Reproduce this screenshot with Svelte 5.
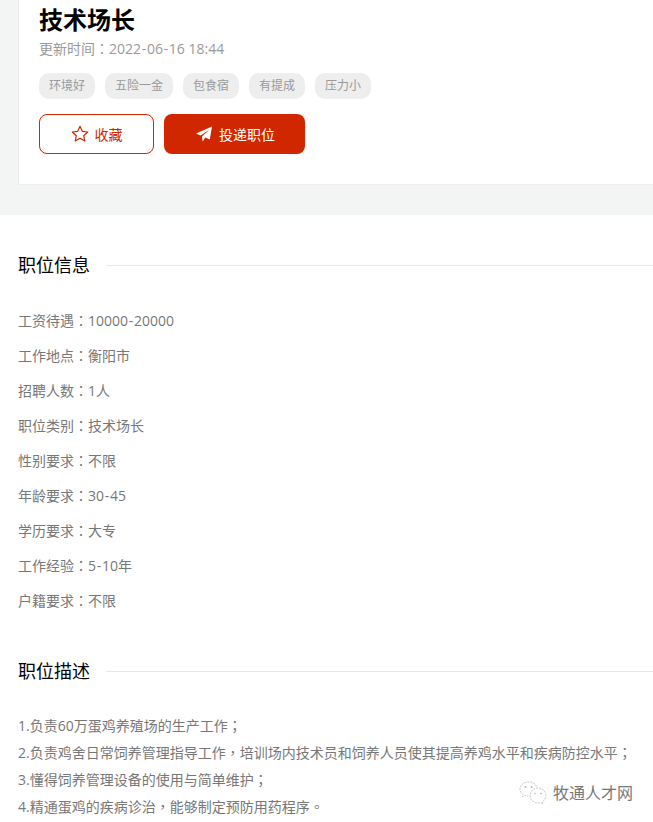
<script>
  const tags = ['环境好', '五险一金', '包食宿', '有提成', '压力小'];
  const info = [
    ['工资待遇', '10000-20000'],
    ['工作地点', '衡阳市'],
    ['招聘人数', '1人'],
    ['职位类别', '技术场长'],
    ['性别要求', '不限'],
    ['年龄要求', '30-45'],
    ['学历要求', '大专'],
    ['工作经验', '5-10年'],
    ['户籍要求', '不限']
  ];
  const desc = [
    ['1.负责60万蛋鸡养殖场的生产工作', '；'],
    ['2.负责鸡舍日常饲养管理指导工作', '，', '培训场内技术员和饲养人员使其提高养鸡水平和疾病防控水平', '；'],
    ['3.懂得饲养管理设备的使用与简单维护', '；'],
    ['4.精通蛋鸡的疾病诊治', '，', '能够制定预防用药程序', '。']
  ];
  const marks = '：；，。';
  const split = (s) => s.split(/(-)/);
</script>

{#snippet dashed(text)}{#each split(text) as part}{#if part === '-'}<span class="dash">-</span>{:else}{part}{/if}{/each}{/snippet}

<div class="page">
  <section class="top">
    <div class="card">
      <h1>技术场长</h1>
      <p class="updated"><span>更新时间</span><span class="mark">：</span>{@render dashed('2022-06-16')} 18:44</p>
      <ul class="tags">
        {#each tags as tag}
          <li>{tag}</li>
        {/each}
      </ul>
      <div class="actions">
        <button class="fav">
          <svg viewBox="0 0 18 18" width="18" height="18" aria-hidden="true">
            <path d="M9 1.300l2.300 5 5.400.700-4 3.700 1.100 5.300L9 13.300l-4.800 2.700 1.100-5.300-4-3.700 5.400-.700z" fill="none" stroke="currentColor" stroke-width="1.200" stroke-linejoin="round" />
          </svg>
          收藏
        </button>
        <button class="apply">
          <svg viewBox="0 0 16 16" width="16" height="16" aria-hidden="true">
            <path d="M16 .5L13.800 13.600 9.300 11.600 6.600 15.500 6 10.400 13.400 3.700 4.600 9.600 0 7.600z" fill="currentColor" />
          </svg>
          投递职位
        </button>
      </div>
    </div>
  </section>

  <section class="info">
    <h2><span>职位信息</span></h2>
    <ul class="rows">
      {#each info as row}
        <li>{row[0]}<span class="mark">：</span>{@render dashed(row[1])}</li>
      {/each}
    </ul>
  </section>

  <section class="desc">
    <h2><span>职位描述</span></h2>
    <div class="lines">
      {#each desc as line}
        <p>{#each line as part}{#if marks.includes(part)}<span class="mark">{part}</span>{:else}{part}{/if}{/each}</p>
      {/each}
    </div>
  </section>

  <div class="watermark">
    <svg viewBox="0 0 28 24" width="28" height="24" aria-hidden="true">
      <g fill="none" stroke="#c4c4c4" stroke-width=".9" stroke-dasharray="2 1">
        <path d="M17.500 5.500C16.500 2.800 13.500 1 9.700 1 4.800 1 1 4 1 8c0 2.300 1.200 4.200 3.200 5.600l-.8 2.400 2.900-1.500c1 .3 2 .5 3.200.5" />
        <path d="M27 14.500c0-4-3.800-7.500-8-7.500s-8 3.500-8 7.500 3.800 7.500 8 7.500c1 0 1.800-.1 2.600-.4l2.500 1.400-.7-2.300c2-1.300 3.600-3.600 3.600-6.200z" />
      </g>
      <circle cx="6.500" cy="6" r="1" fill="#b5b5b5" />
      <circle cx="12.500" cy="6" r="1" fill="#b5b5b5" />
      <circle cx="16" cy="12.500" r=".8" fill="#b5b5b5" />
      <circle cx="22" cy="12.500" r=".8" fill="#b5b5b5" />
    </svg>
    <span>牧通人才网</span>
  </div>
</div>

<style>
  :global(body) {
    margin: 0;
    background: #fff;
  }
  .page {
    position: relative;
    width: 653px;
    height: 822px;
    overflow: hidden;
    font-family: "Open Sans", "Noto Sans CJK SC", sans-serif;
    color: #777;
  }
  .mark {
    font-family: "Noto Sans CJK TC", sans-serif;
  }
  .dash {
    padding: 0 .7px;
  }
  .top {
    height: 215px;
    background: #f3f4f4;
    padding-left: 18px;
    box-sizing: border-box;
  }
  .card {
    height: 185px;
    box-sizing: border-box;
    background: #fff;
    border-left: 1px solid #eee;
    border-bottom: 1px solid #eee;
    padding: 0 0 0 20px;
  }
  h1 {
    margin: 0;
    height: 38px;
    line-height: 39px;
    font-size: 24px;
    font-weight: 700;
    color: #000;
  }
  .updated {
    margin: 0;
    height: 20px;
    line-height: 20px;
    font-size: 14px;
    color: #999;
  }
  .tags {
    display: flex;
    gap: 10px;
    margin: 15px 0 0;
    padding: 0;
    list-style: none;
  }
  .tags li {
    height: 26px;
    line-height: 26px;
    padding: 0 10px;
    border-radius: 10px;
    background: #eee;
    font-size: 12px;
    color: #999;
  }
  .actions {
    display: flex;
    gap: 10px;
    margin-top: 15px;
  }
  button {
    display: flex;
    align-items: center;
    justify-content: center;
    height: 40px;
    padding: 0;
    border-radius: 8px;
    font: inherit;
    font-size: 14px;
  }
  .fav {
    width: 115px;
    gap: 6px;
    background: #fff;
    border: 1px solid #d12700;
    color: #d12700;
  }
  .apply {
    width: 141px;
    gap: 7px;
    padding-left: 2px;
    background: #d12700;
    border: 0;
    color: #fff;
  }
  h2 {
    display: flex;
    align-items: center;
    gap: 16px;
    margin: 0;
    height: 30px;
    font-size: 18px;
    font-weight: 400;
    color: #000;
  }
  h2 span {
    margin-top: -2px;
  }
  h2::after {
    content: "";
    flex: 1;
    height: 1px;
    background: #e8e8e8;
  }
  .info {
    padding: 35px 0 0 18px;
  }
  .rows {
    margin: 23px 0 0;
    padding: 0;
    list-style: none;
  }
  .rows li {
    height: 35px;
    line-height: 35px;
    font-size: 14px;
  }
  .desc {
    padding: 38px 0 0 18px;
  }
  .lines {
    margin-top: 26px;
  }
  .lines p {
    margin: 0;
    height: 27px;
    line-height: 27px;
    font-size: 14px;
    white-space: nowrap;
  }
  .watermark {
    position: absolute;
    left: 519px;
    top: 781px;
    display: flex;
    align-items: center;
    font-size: 16px;
    color: #777;
  }
  .watermark span {
    margin-left: 6px;
    margin-top: -2px;
  }
</style>
